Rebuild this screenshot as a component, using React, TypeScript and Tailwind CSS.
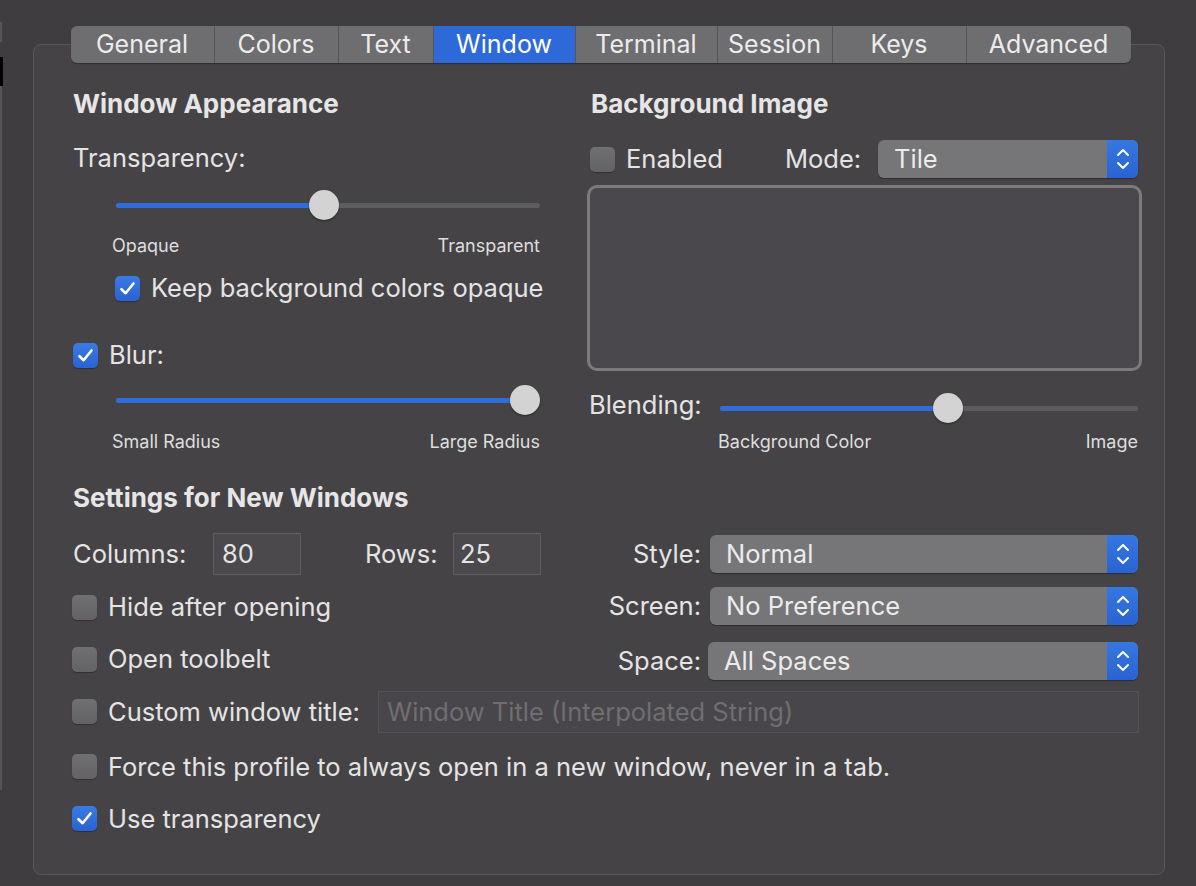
import type { ReactNode } from 'react';

const font = { fontFamily: 'Inter, "Noto Sans", sans-serif' };

const tabs = [
  { name: 'General', w: 'w-[143px]' },
  { name: 'Colors', w: 'w-[124px]' },
  { name: 'Text', w: 'w-[95px]' },
  { name: 'Window', w: 'w-[142px]' },
  { name: 'Terminal', w: 'w-[142px]' },
  { name: 'Session', w: 'w-[115px]' },
  { name: 'Keys', w: 'w-[134px]' },
  { name: 'Advanced', w: 'w-[165px]' },
];

function Check({ on }: { on?: boolean }) {
  if (on) {
    return (
      <div className="w-[25px] h-[25px] shrink-0 rounded-[5px] bg-gradient-to-b from-[#3a7be6] to-[#2a62d0] flex items-center justify-center shadow-[0_1px_1px_rgba(0,0,0,0.3)]">
        <svg width="17" height="15" viewBox="0 0 17 15" fill="none">
          <path d="M2.5 8.2 L6.6 12.2 L14.5 2.5" stroke="#fff" strokeWidth="2.6" strokeLinecap="round" strokeLinejoin="round" />
        </svg>
      </div>
    );
  }
  return <div className="w-[25px] h-[25px] shrink-0 rounded-[5px] bg-gradient-to-b from-[#706f72] to-[#636265] shadow-[0_1px_1px_rgba(0,0,0,0.3)]" />;
}

function Slider({ pct }: { pct: number }) {
  return (
    <div className="relative h-[30px] w-full">
      <div className="absolute left-0 right-0 top-[13px] h-[5px] rounded-full bg-[#5c5b5e]" />
      <div
        className="absolute left-0 top-[13px] h-[5px] rounded-full bg-[#2f6ddb]"
        style={{ width: `calc(15px + (100% - 30px) * ${pct})` }}
      />
      <div
        className="absolute top-0 w-[30px] h-[30px] rounded-full bg-[#d3d3d3] shadow-[0_1px_2px_rgba(0,0,0,0.45)]"
        style={{ left: `calc((100% - 30px) * ${pct})` }}
      />
    </div>
  );
}

function Popup({ value, className }: { value: string; className?: string }) {
  return (
    <div className={`h-[38px] flex rounded-[6px] overflow-hidden bg-[#767578] shadow-[0_1px_1px_rgba(0,0,0,0.35)] ${className ?? ''}`}>
      <div className="flex-1 flex items-center pl-[16px] text-[25.5px] text-[#ececec]">{value}</div>
      <div className="w-[31px] bg-gradient-to-b from-[#3578e2] to-[#2a63d1] flex items-center justify-center">
        <svg width="16" height="26" viewBox="0 0 16 26" fill="none">
          <path d="M3 9 L8 4 L13 9" stroke="#fff" strokeWidth="2" strokeLinecap="round" strokeLinejoin="round" />
          <path d="M3 17 L8 22 L13 17" stroke="#fff" strokeWidth="2" strokeLinecap="round" strokeLinejoin="round" />
        </svg>
      </div>
    </div>
  );
}

function CheckRow({ on, children, className }: { on?: boolean; children: ReactNode; className?: string }) {
  return (
    <div className={`h-[30px] flex items-center gap-[11px] ${className ?? ''}`}>
      <Check on={on} />
      <span className="text-[25.5px] text-[#e4e4e4] whitespace-nowrap">{children}</span>
    </div>
  );
}

export default function App() {
  return (
    <div className="w-[1196px] h-[886px] bg-[#3f3d40] flex overflow-hidden" style={font}>
      {/* left window edge */}
      <div className="w-[3px] shrink-0 flex flex-col">
        <div className="mt-[22px] h-[20px] w-[2px] bg-[#555457]" />
        <div className="mt-[15px] h-[29px] w-[3px] bg-black" />
        <div className="h-[704px] w-[2px] bg-[#555457]" />
      </div>

      <div className="flex-1 flex flex-col pl-[30px] pr-[30px]">
        {/* tab bar */}
        <div className="relative z-10 mt-[26px] self-center ml-[2px] flex h-[37px] rounded-[6px] overflow-hidden bg-[#6e6d70] shadow-[0_1px_1px_rgba(0,0,0,0.35)]">
          {tabs.map((t, i) => (
            <div
              key={t.name}
              className={`${t.w} h-full flex items-center justify-center text-[25px] ${
                t.name === 'Window' ? 'bg-[#2d69d9] text-white' : 'text-[#ececec]'
              } ${i > 0 ? 'border-l border-[#565558]' : ''}`}
            >
              {t.name}
            </div>
          ))}
        </div>

        {/* panel */}
        <div className="mt-[-19px] h-[831px] w-[1132px] rounded-[8px] border border-[#58575a] bg-[#454346] pl-[39px] pr-[22px] pt-[43px]">
          {/* top section */}
          <div className="flex">
            {/* window appearance */}
            <div className="w-[467px] flex flex-col">
              <div className="h-[30px] flex items-center text-[26px] font-bold text-[#e6e6e6]">Window Appearance</div>
              <div className="mt-[25px] h-[30px] flex items-center text-[25.5px] text-[#e4e4e4]">Transparency:</div>
              <div className="mt-[17px] ml-[43px]">
                <Slider pct={0.49} />
              </div>
              <div className="mt-[15px] ml-[39px] h-[20px] flex justify-between items-center text-[18px] text-[#dedede]">
                <span>Opaque</span>
                <span>Transparent</span>
              </div>
              <CheckRow on className="mt-[18px] ml-[42px]">Keep background colors opaque</CheckRow>
              <CheckRow on className="mt-[37px]">Blur:</CheckRow>
              <div className="mt-[15px] ml-[43px]">
                <Slider pct={1} />
              </div>
              <div className="mt-[16px] ml-[39px] h-[20px] flex justify-between items-center text-[18px] text-[#dedede]">
                <span>Small Radius</span>
                <span>Large Radius</span>
              </div>
            </div>

            {/* background image */}
            <div className="ml-[47px] w-[556px] flex flex-col">
              <div className="h-[30px] pl-[4px] flex items-center text-[26px] font-bold text-[#e6e6e6]">Background Image</div>
              <div className="mt-[22px] h-[38px] flex items-center">
                <div className="ml-[3px] w-[195px]">
                  <CheckRow>Enabled</CheckRow>
                </div>
                <span className="w-[93px] text-[25.5px] text-[#e4e4e4]">Mode:</span>
                <Popup value="Tile" className="w-[260px]" />
              </div>
              <div className="mt-[7px] h-[186px] rounded-[10px] border-[3px] border-[#7b7a7d] bg-[#4a484c]" />
              <div className="mt-[19px] h-[30px] flex items-center">
                <span className="ml-[2px] w-[131px] text-[25.5px] text-[#e4e4e4]">Blending:</span>
                <div className="w-[418px] mt-[6px]">
                  <Slider pct={0.55} />
                </div>
              </div>
              <div className="mt-[11px] ml-[131px] w-[420px] h-[20px] flex justify-between items-center text-[18px] text-[#dedede]">
                <span>Background Color</span>
                <span>Image</span>
              </div>
            </div>
          </div>

          {/* settings for new windows */}
          <div className="mt-[31px] flex">
            <div className="w-[507px] flex flex-col">
              <div className="h-[30px] flex items-center text-[26px] font-bold text-[#e6e6e6]">Settings for New Windows</div>
              <div className="mt-[21px] h-[42px] flex items-center text-[25.5px] text-[#e4e4e4]">
                <span className="w-[140px]">Columns:</span>
                <div className="w-[88px] h-[42px] flex items-center pl-[8px] bg-[#4b494c] border border-[#5e5d60]">80</div>
                <span className="ml-[64px] w-[88px]">Rows:</span>
                <div className="w-[88px] h-[42px] flex items-center pl-[6px] bg-[#4b494c] border border-[#5e5d60]">25</div>
              </div>
              <CheckRow className="mt-[17px] -ml-[1px]">Hide after opening</CheckRow>
              <CheckRow className="mt-[22px] -ml-[1px]">Open toolbelt</CheckRow>
            </div>
            <div className="w-[560px] flex flex-col pt-[53px] text-[25.5px] text-[#e4e4e4]">
              <div className="flex items-center">
                <span className="w-[130px] text-right pr-[9px]">Style:</span>
                <Popup value="Normal" className="flex-1 mr-[2px]" />
              </div>
              <div className="mt-[14px] flex items-center">
                <span className="w-[130px] text-right pr-[9px]">Screen:</span>
                <Popup value="No Preference" className="flex-1 mr-[2px]" />
              </div>
              <div className="mt-[16px] flex items-center">
                <span className="w-[128px] text-right pr-[7px]">Space:</span>
                <Popup value="All Spaces" className="flex-1 mr-[2px]" />
              </div>
            </div>
          </div>

          <div className="mt-[11px] h-[42px] flex items-center -ml-[1px]">
            <div className="w-[306px]">
              <CheckRow>Custom window title:</CheckRow>
            </div>
            <div className="w-[761px] h-[42px] flex items-center pl-[8px] bg-[#48464a] border border-[#535255] text-[25.5px] text-[#6f6e71]">
              Window Title (Interpolated String)
            </div>
          </div>
          <CheckRow className="mt-[19px] -ml-[1px]">Force this profile to always open in a new window, never in a tab.</CheckRow>
          <CheckRow on className="mt-[22px] -ml-[1px]">Use transparency</CheckRow>
        </div>
      </div>
    </div>
  );
}
